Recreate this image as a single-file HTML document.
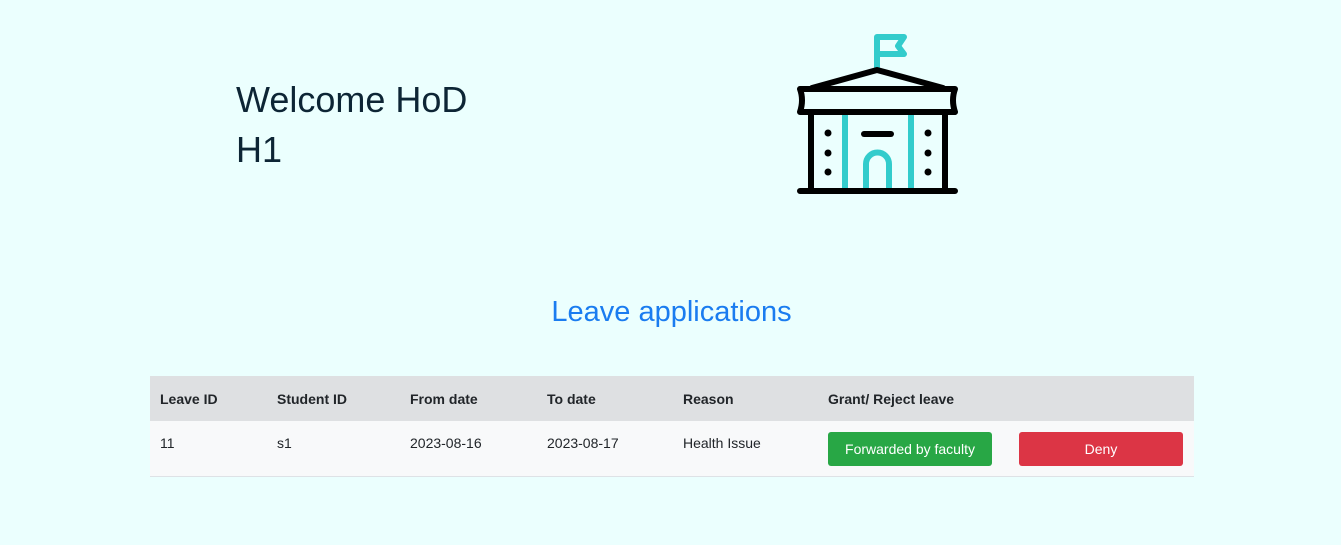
<!DOCTYPE html>
<html><head><meta charset="utf-8"><style>
body{margin:0;width:1341px;height:545px;background:#ebfffe;font-family:"Liberation Sans",Arial,sans-serif;position:relative;overflow:hidden}
.w{position:absolute;left:236px;top:75px;font-size:36px;line-height:50px;color:#0d2535}
h2{position:absolute;left:0;width:1343px;text-align:center;top:296px;margin:0;font-weight:400;font-size:29px;color:#1a7cf0}
table{position:absolute;left:150px;top:376px;width:1044px;border-collapse:collapse;font-size:14px;color:#212529}
th{background:#dee0e2;height:45px;text-align:left;font-weight:700;padding:0 0 0 10px;vertical-align:middle}
td{background:#f8f9fa;height:55px;padding:0 0 0 10px;vertical-align:top;padding-top:14px;box-sizing:border-box;border-bottom:1px solid #dee2e6}
.b{position:absolute;top:432px;height:34px;border-radius:3px;color:#fff;font-size:14px;line-height:34px;text-align:center}
</style></head><body>
<div class="w">Welcome HoD<br>H1</div>
<svg style="position:absolute;left:0;top:0" width="1341" height="220" fill="none" stroke-linecap="round" stroke-linejoin="round">
<g stroke="#33cccc" stroke-width="6">
<path d="M877 68V37H904L898 46L904 54H877"/>
<path d="M845 115V189M911 115V189"/>
<path d="M866 189V164A11.5 11.5 0 0 1 889 164V189"/>
</g>
<g stroke="#000" stroke-width="6">
<path d="M812 88L877 70L943 88"/>
<path d="M800 89H955Q951 100 955 112H800Q804 100 800 89Z"/>
<path d="M811 113V189M945 113V189M800 191H955"/>
<path d="M864 134H891"/>
</g>
<g fill="#000"><circle cx="828" cy="133" r="3.5"/><circle cx="828" cy="153" r="3.5"/><circle cx="828" cy="172" r="3.5"/><circle cx="928" cy="133" r="3.5"/><circle cx="928" cy="153" r="3.5"/><circle cx="928" cy="172" r="3.5"/></g>
</svg>
<h2>Leave applications</h2>
<table><tr><th style="width:107px">Leave ID</th><th style="width:123px">Student ID</th><th style="width:127px">From date</th><th style="width:126px">To date</th><th style="width:135px">Reason</th><th>Grant/ Reject leave</th><th style="width:174px"></th></tr>
<tr><td>11</td><td>s1</td><td>2023-08-16</td><td>2023-08-17</td><td>Health Issue</td><td></td><td></td></tr></table>
<div class="b" style="left:828px;width:164px;background:#28a745">Forwarded by faculty</div>
<div class="b" style="left:1019px;width:164px;background:#dc3545">Deny</div>
</body></html>
